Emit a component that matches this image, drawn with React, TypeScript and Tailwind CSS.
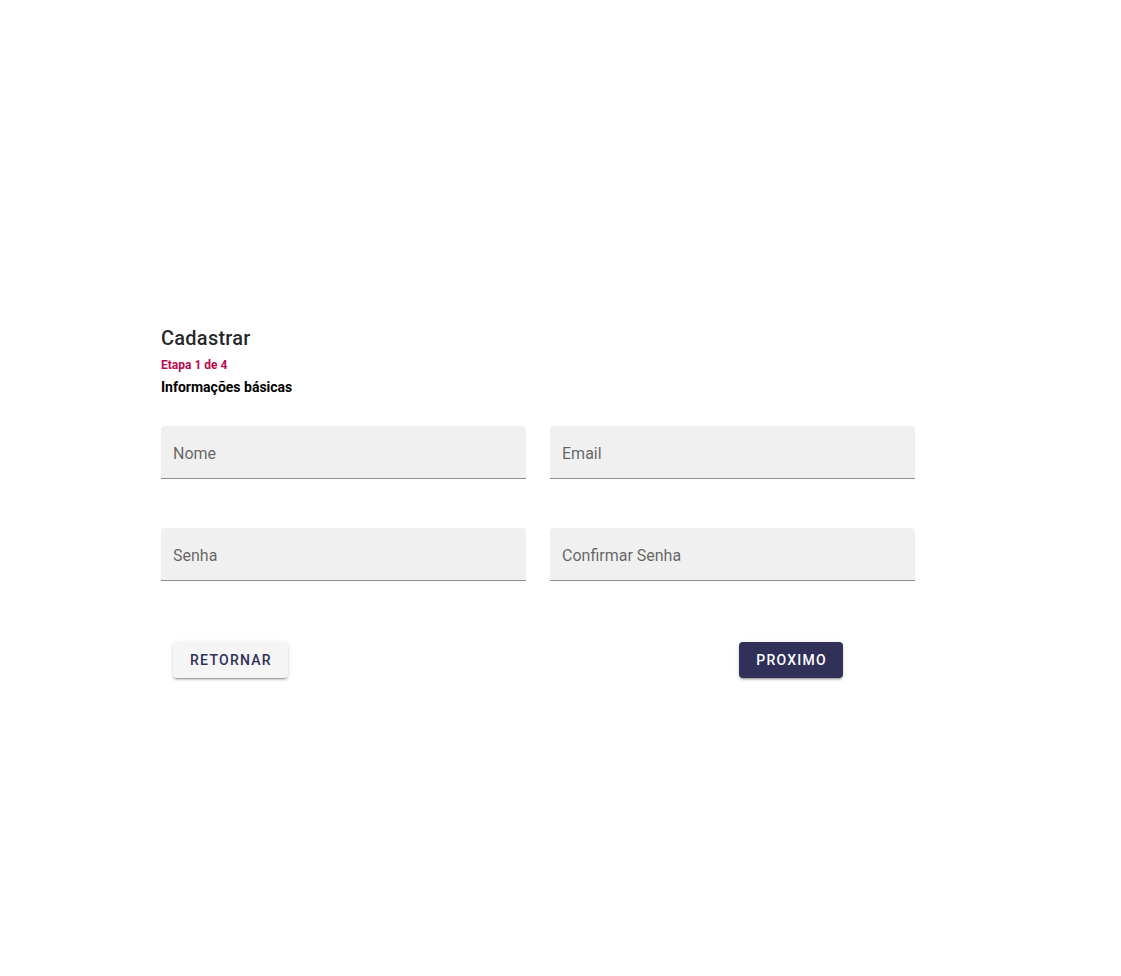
import React from "react";

type FieldProps = { id: string; label: string; type: string };

function Field({ id, label, type }: FieldProps) {
  return (
    <div className="relative">
      <input
        id={id}
        name={id}
        type={type}
        placeholder=" "
        className="peer block h-[53px] w-full rounded-t border-b border-[#8f8f8f] bg-[#f0f0f0] px-3 pt-4 text-base text-black/85 outline-none focus:border-[#303058]"
      />
      <label
        htmlFor={id}
        className="pointer-events-none absolute top-4 left-3 text-base leading-6 text-black/60 peer-focus:top-1 peer-focus:text-xs peer-[:not(:placeholder-shown)]:top-1 peer-[:not(:placeholder-shown)]:text-xs"
      >
        {label}
      </label>
    </div>
  );
}

const buttonBase =
  "h-9 cursor-pointer rounded pr-4 pl-[17px] text-sm font-medium tracking-[0.09em] uppercase shadow-[0_3px_1px_-2px_rgba(0,0,0,0.2),0_2px_2px_0_rgba(0,0,0,0.14),0_1px_5px_0_rgba(0,0,0,0.12)]";

export default function App() {
  return (
    <main className="flex min-h-screen items-center bg-white font-['Roboto',sans-serif]">
      <form className="mx-auto w-full max-w-[1121px] pt-6 pr-[206px] pl-[161px]" onSubmit={(e) => e.preventDefault()}>
        <h1 className="text-xl leading-8 font-medium tracking-[0.0125em] text-black/87">Cadastrar</h1>
        <p className="mt-px text-xs leading-5 font-bold text-[#b80c50]">Etapa 1 de 4</p>
        <h2 className="text-sm leading-6 font-bold text-black">Informações básicas</h2>
        <div className="mt-[27px] grid grid-cols-2 gap-x-6 gap-y-[49px]">
          <Field id="nome" label="Nome" type="text" />
          <Field id="email" label="Email" type="email" />
          <Field id="senha" label="Senha" type="password" />
          <Field id="confirmar-senha" label="Confirmar Senha" type="password" />
        </div>
        <div className="mt-[61px] flex justify-between pr-[72px] pl-3">
          <button type="button" className={`${buttonBase} bg-[#f5f5f5] text-[#303058]`}>
            Retornar
          </button>
          <button type="submit" className={`${buttonBase} bg-[#303058] text-white`}>
            Proximo
          </button>
        </div>
      </form>
    </main>
  );
}
